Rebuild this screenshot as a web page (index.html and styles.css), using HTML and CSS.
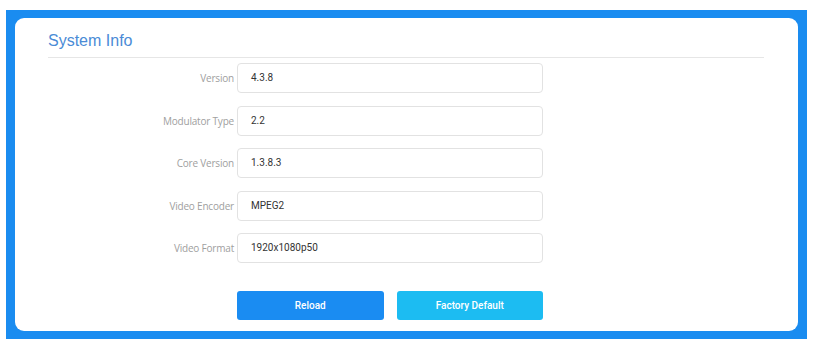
FILE: index.html
```html
<!DOCTYPE html>
<html>
<head>
<meta charset="utf-8">
<link rel="stylesheet" href="styles.css">
</head>
<body>
<div class="frame">
  <div class="panel">
    <h2 class="title">System Info</h2>
    <form class="form">
      <label class="label">Version</label>
      <div class="field">4.3.8</div>
      <label class="label">Modulator Type</label>
      <div class="field">2.2</div>
      <label class="label">Core Version</label>
      <div class="field">1.3.8.3</div>
      <label class="label">Video Encoder</label>
      <div class="field">MPEG2</div>
      <label class="label">Video Format</label>
      <div class="field">1920x1080p50</div>
      <div class="actions">
        <button type="button" class="btn btn-reload">Reload</button>
        <button type="button" class="btn btn-default">Factory Default</button>
      </div>
    </form>
  </div>
</div>
</body>
</html>
```
FILE: styles.css
```css
html, body {
  margin: 0;
  padding: 0;
  background: #ffffff;
}
body {
  font-family: "Open Sans", "Liberation Sans", sans-serif;
}
.frame {
  margin: 10px 8px 0 6px;
  background: #1a8cf0;
  padding: 8px 9px;
  height: 313px;
}
.panel {
  background: #ffffff;
  border-radius: 9px;
  height: 313px;
  box-sizing: border-box;
  padding: 0 34px 0 33px;
}
.title {
  margin: 0;
  padding-top: 12px;
  height: 27px;
  font-family: "Liberation Sans", Arial, sans-serif;
  font-weight: normal;
  font-size: 16px;
  line-height: 22px;
  color: #4a8bd6;
  border-bottom: 1px solid #e6e6e6;
}
.form {
  display: grid;
  grid-template-columns: 186px 306px;
  column-gap: 3px;
  row-gap: 12.5px;
  margin-top: 5px;
  align-items: center;
}
.label {
  text-align: right;
  font-size: 10px;
  color: #a0a0a0;
  letter-spacing: -0.2px;
}
.field {
  height: 30px;
  box-sizing: border-box;
  border: 1px solid #e2e2e2;
  border-radius: 4px;
  padding-left: 13px;
  font-family: "Roboto", "Liberation Sans", sans-serif;
  font-size: 10px;
  line-height: 28px;
  color: #333333;
}
.actions {
  grid-column: 2;
  display: flex;
  gap: 13px;
  margin-top: 15px;
}
.btn {
  width: 147px;
  height: 29px;
  border: none;
  border-radius: 3px;
  color: #ffffff;
  font-family: "Liberation Sans Narrow", "Roboto", sans-serif;
  font-size: 10px;
  font-weight: 500;
  padding: 0;
}
.btn-reload {
  background: #1a8cf2;
}
.btn-default {
  background: #1cbcf2;
}
```
